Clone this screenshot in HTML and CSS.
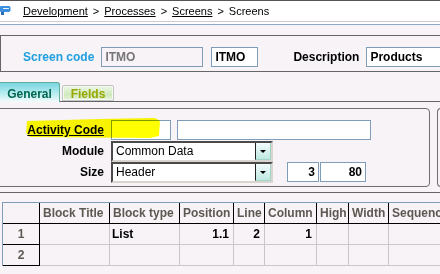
FILE: index.html
```html
<!DOCTYPE html>
<html lang="en">
<head>
    <meta charset="UTF-8">
    <link rel="stylesheet" href="styles.css">
    <title>Screens</title>
</head>
<body>
    <div class="crumbs">
        <svg class="crumb-icon" width="12" height="20" viewBox="0 0 12 20">
            <rect x="0" y="5" width="10" height="6" rx="1" fill="#3a8ee0"/>
            <rect x="3" y="7" width="6" height="1" fill="#e8f4ff"/>
            <rect x="10" y="6" width="1" height="4" fill="#9cc8f0"/>
            <rect x="1" y="11" width="3" height="3" fill="#2c6cb0"/>
        </svg>
        <a href="#">Development</a><span class="crumb-sep">&gt;</span>
        <a href="#">Processes</a><span class="crumb-sep">&gt;</span>
        <a href="#">Screens</a><span class="crumb-sep">&gt;</span>
        <span>Screens</span>
    </div>
    <div class="crumb-rule"></div>

    <div class="header-panel">
        <label class="code-label">Screen code</label>
        <input class="box code-input" type="text" value="ITMO" readonly>
        <input class="box short-input" type="text" value="ITMO">
        <label class="desc-label">Description</label>
        <input class="box desc-input" type="text" value="Products">
    </div>

    <div class="tabs">
        <div class="tab tab-general">General</div>
        <div class="tab tab-fields">Fields</div>
    </div>

    <div class="tab-panel">
        <div class="group-box">
            <div class="form-grid">
                <label class="form-label act-label">Activity Code</label>
                <div class="form-controls">
                    <input class="box act-input" type="text">
                    <input class="box act-name" type="text">
                </div>

                <label class="form-label">Module</label>
                <div class="form-controls">
                    <div class="combo">
                        <span class="combo-text">Common Data</span>
                        <span class="combo-btn"><span class="arrow"></span></span>
                    </div>
                </div>

                <label class="form-label">Size</label>
                <div class="form-controls">
                    <div class="combo">
                        <span class="combo-text">Header</span>
                        <span class="combo-btn"><span class="arrow"></span></span>
                    </div>
                    <input class="box num num-a" type="text" value="3">
                    <input class="box num num-b" type="text" value="80">
                </div>
            </div>
            <svg class="marker" width="136" height="22" viewBox="0 0 136 22">
                <polygon points="1,4 74,2 129,1 134,4 133,19 124,21 4,20 0,16" fill="#ffff00"/>
            </svg>
        </div>
        <div class="side-box"></div>
    </div>

    <div class="grid">
        <div class="gh corner"></div>
        <div class="gh">Block Title</div>
        <div class="gh">Block type</div>
        <div class="gh">Position</div>
        <div class="gh">Line</div>
        <div class="gh">Column</div>
        <div class="gh">High</div>
        <div class="gh">Width</div>
        <div class="gh">Sequence</div>

        <div class="rh">1</div>
        <div class="gc"></div>
        <div class="gc">List</div>
        <div class="gc right">1.1</div>
        <div class="gc right">2</div>
        <div class="gc right">1</div>
        <div class="gc"></div>
        <div class="gc"></div>
        <div class="gc"></div>

        <div class="rh">2</div>
        <div class="gc"></div>
        <div class="gc"></div>
        <div class="gc"></div>
        <div class="gc"></div>
        <div class="gc"></div>
        <div class="gc"></div>
        <div class="gc"></div>
        <div class="gc"></div>
    </div>
</body>
</html>
```

FILE: styles.css
```css
body {
    margin: 0;
    width: 440px;
    height: 274px;
    overflow: hidden;
    background: #f7f3f7;
    font: 12px "Liberation Sans", Arial, sans-serif;
    color: #000;
}

/* breadcrumb bar */
.crumbs {
    display: flex;
    align-items: center;
    height: 20px;
    background: #fff;
    border-top: 1px solid #555;
    border-bottom: 1px solid #d4cccc;
    font-size: 11px;
    white-space: nowrap;
}

.crumb-icon {
    margin-right: 11px;
    flex: none;
}

.crumbs a {
    color: #000;
}

.crumb-sep {
    margin: 0 5px;
}

.crumb-rule {
    height: 2px;
    background: #fff;
    border-bottom: 1px solid #8eaacb;
}

/* inputs */
.box {
    box-sizing: border-box;
    height: 20px;
    margin: 0;
    padding: 0 3px;
    border: 1px solid #7f9db9;
    background: #fff;
    font: bold 12px "Liberation Sans", Arial, sans-serif;
    color: #000;
    outline: none;
}

/* header */
.header-panel {
    display: flex;
    align-items: flex-start;
    margin-top: 10px;
    width: 480px;
    height: 24px;
    padding: 11px 0 0 22px;
    border: 1px solid #666;
    border-right: none;
    font-weight: bold;
    white-space: nowrap;
}

.header-panel label {
    line-height: 20px;
}

.code-label {
    color: #1e9fe0;
    margin-right: 7px;
}

.code-input {
    width: 102px;
    background: #f7f3f7;
    color: #767676;
}

.short-input {
    width: 47px;
    margin-left: 8px;
}

.desc-label {
    margin-left: 35px;
    margin-right: 7px;
}

.desc-input {
    width: 110px;
}

/* tabs */
.tabs {
    display: flex;
    align-items: flex-end;
    margin-top: 10px;
    height: 19px;
    font-weight: bold;
}

.tab {
    box-sizing: border-box;
    text-align: center;
}

.tab-general {
    position: relative;
    z-index: 1;
    width: 60px;
    height: 20px;
    margin-bottom: -1px;
    padding-top: 4px;
    border: 1px solid #5fae95;
    border-left: none;
    border-bottom: none;
    border-radius: 0 3px 0 0;
    background: linear-gradient(#7ad6e2, #b6ecf0 55%, #f4fbfb);
    color: #00664e;
}

.tab-fields {
    width: 52px;
    height: 16px;
    margin-left: 2px;
    padding-top: 1px;
    border: 1px solid #c4c4c4;
    border-radius: 2px 2px 0 0;
    background: linear-gradient(#eef7e8, #cfe9bc 60%, #e4f2da);
    box-shadow: inset 0 0 0 1px #f4faf0;
    color: #98a800;
}

/* tab panel */
.tab-panel {
    display: flex;
    width: 480px;
    height: 84px;
    padding-top: 6px;
    border-top: 1px solid #666;
    border-bottom: 1px solid #666;
}

.group-box {
    position: relative;
    box-sizing: border-box;
    flex: none;
    width: 440px;
    height: 79px;
    margin-left: -10px;
    padding-top: 11px;
    border: 1px solid #6e6e6e;
    border-radius: 4px;
}

.side-box {
    box-sizing: border-box;
    width: 20px;
    height: 79px;
    margin-left: 7px;
    border: 1px solid #6e6e6e;
    border-right: none;
    border-radius: 4px 0 0 4px;
}

.form-grid {
    display: grid;
    grid-template-columns: 113px 1fr;
    grid-template-rows: 21px 21px 21px;
    column-gap: 7px;
}

.form-label {
    text-align: right;
    font-weight: bold;
    line-height: 20px;
}

.act-label {
    text-decoration: underline;
}

.form-controls {
    display: flex;
    align-items: flex-start;
}

.act-input {
    width: 60px;
}

.act-name {
    width: 194px;
    margin-left: 6px;
}

.marker {
    position: absolute;
    left: 35px;
    top: 8px;
    mix-blend-mode: multiply;
}

.combo {
    box-sizing: border-box;
    display: flex;
    width: 162px;
    height: 21px;
    border-top: 2px solid #4a4a4a;
    border-left: 2px solid #4a4a4a;
    border-right: 2px solid #d8d4d0;
    border-bottom: 2px solid #d8d4d0;
    background: #fff;
}

.combo-text {
    flex: 1;
    padding-left: 3px;
    line-height: 17px;
}

.combo-btn {
    box-sizing: border-box;
    display: flex;
    align-items: center;
    justify-content: center;
    width: 16px;
    border-left: 1px solid #222;
    border-right: 1px solid #a4d4c6;
    border-bottom: 1px solid #a4d4c6;
    background: linear-gradient(#f2fcfc, #bfe8e2);
}

.arrow {
    width: 0;
    height: 0;
    border-left: 3px solid transparent;
    border-right: 3px solid transparent;
    border-top: 3px solid #000;
}

.num {
    text-align: right;
}

.num-a {
    width: 32px;
    margin-left: 14px;
}

.num-b {
    width: 46px;
    margin-left: 1px;
}

/* block grid */
.grid {
    display: grid;
    grid-template-columns: 37px 70px 70px 54px 31px 52px 32px 40px 80px;
    grid-auto-rows: 21px;
    margin: 9px 0 0 2px;
    border-top: 1px solid #7f9db9;
    border-left: 1px solid #7f9db9;
    font-weight: bold;
    white-space: nowrap;
}

.gh,
.rh,
.gc {
    box-sizing: border-box;
    overflow: hidden;
    line-height: 20px;
}

.gh {
    padding-left: 3px;
    border-right: 1px solid #000;
    border-bottom: 1px solid #000;
    color: #5e5852;
}

.rh {
    text-align: center;
    border-right: 1px solid #000;
    border-bottom: 1px solid #000;
    color: #5e5852;
}

.gc {
    padding: 0 4px 0 2px;
    border-right: 1px solid #c8c8c8;
    border-bottom: 1px solid #c8c8c8;
}

.gc.right {
    text-align: right;
}
```
